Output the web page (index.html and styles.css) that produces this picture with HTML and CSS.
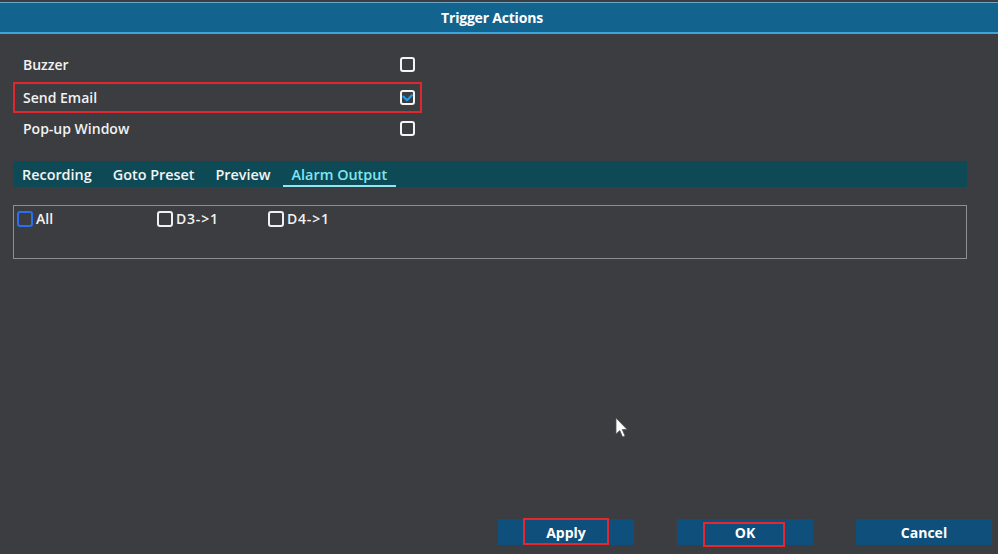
FILE: index.html
```html
<!DOCTYPE html>
<html>
<head>
<meta charset="utf-8">
<title>Trigger Actions</title>
<link rel="stylesheet" href="styles.css">
</head>
<body>
<div class="screen">
  <div class="titlebar"><span class="title">Trigger Actions</span></div>

  <div class="options">
    <div class="opt first"><span>Buzzer</span><span class="cb"></span></div>
    <div class="opt hl"><span>Send Email</span><span class="cb checked"><svg viewBox="0 0 12 12" width="12" height="12"><path d="M1.5 4.5 L5.5 8.5 L10.8 3" fill="none" stroke="#1e9cf0" stroke-width="2.4" stroke-linecap="round" stroke-linejoin="round"/></svg></span></div>
    <div class="opt last"><span>Pop-up Window</span><span class="cb"></span></div>
  </div>

  <div class="tabs">
    <span class="tab">Recording</span>
    <span class="tab">Goto Preset</span>
    <span class="tab">Preview</span>
    <span class="tab active">Alarm Output</span>
  </div>

  <div class="panel">
    <div class="item w1"><span class="cb2 blue"></span><span>All</span></div>
    <div class="item w2"><span class="cb2"></span><span class="sp">D3-&gt;1</span></div>
    <div class="item"><span class="cb2"></span><span class="sp">D4-&gt;1</span></div>
  </div>

  <div class="footer">
    <div class="btn">Apply<span class="mark m1"></span></div>
    <div class="btn">OK<span class="mark m2"></span></div>
    <div class="btn">Cancel</div>
  </div>

  <svg class="cursor" width="14" height="22" viewBox="0 0 14 22"><path d="M1 1 L1 17 L4.8 13.6 L7.6 20 L10 19 L7.3 12.6 L12.2 12.6 Z" fill="#ffffff" stroke="#555" stroke-width="0.8"/></svg>
</div>
</body>
</html>
```

FILE: styles.css
```css
* { box-sizing: border-box; }
html, body { margin: 0; padding: 0; }
body {
  background: #3b3d41;
  font-family: "Open Sans", "Noto Sans", sans-serif;
  color: #f2f2f2;
}
.screen {
  position: relative;
  width: 998px;
  height: 554px;
  display: flex;
  flex-direction: column;
  background: #3b3d41;
  overflow: hidden;
}
.titlebar {
  margin-top: 2px;
  height: 32px;
  background: #13638f;
  border-top: 1px solid #6aa6c6;
  border-bottom: 2px solid #3ea4dc;
  display: flex;
  align-items: center;
  justify-content: center;
  padding-right: 14px;
}
.title {
  font-weight: 700;
  font-size: 14px;
  color: #ffffff;
  letter-spacing: -0.2px;
}
.options {
  margin: 14px 0 0 13px;
  width: 409px;
  display: flex;
  flex-direction: column;
}
.opt {
  height: 32px;
  display: flex;
  align-items: center;
  justify-content: space-between;
  padding: 0 5px 0 8px;
  border: 2px solid transparent;
  font-size: 14px;
  font-weight: 600;
}
.opt.first { height: 34px; padding-bottom: 1px; }
.opt.hl { border-color: #e0262e; height: 31px; }
.opt.last { height: 30px; }
.cb {
  width: 15px;
  height: 15px;
  border: 2px solid #f4f4f4;
  border-radius: 3px;
  display: flex;
  align-items: center;
  justify-content: center;
}
.tabs {
  margin: 18px 0 0 13px;
  width: 954px;
  height: 26px;
  background: #0e4a56;
  display: flex;
  align-items: stretch;
  gap: 3px;
  font-size: 14.4px;
  font-weight: 600;
}
.tab {
  padding: 3px 9px 0;
  display: flex;
  align-items: center;
  color: #f4f4f4;
  border-bottom: 2px solid transparent;
}
.tab.active {
  color: #7fe6f2;
  border-bottom-color: #8fe8f0;
}
.panel {
  margin: 18px 0 0 13px;
  width: 954px;
  height: 54px;
  border: 1.5px solid #8a8d91;
  display: flex;
  align-items: flex-start;
  padding: 3px 0 0 3px;
  font-size: 14px;
  font-weight: 600;
}
.item {
  display: flex;
  align-items: center;
  gap: 3px;
  padding-top: 1px;
  line-height: 18px;
}
.sp { letter-spacing: 0.8px; }
.w1 { width: 140px; }
.w2 { width: 111px; }
.cb2 {
  width: 16px;
  height: 16px;
  border: 2px solid #f0f0f0;
  border-radius: 3px;
}
.cb2.blue { border-color: #2a6ff0; }
.footer {
  margin-top: auto;
  display: flex;
  justify-content: flex-end;
  gap: 43px;
  padding: 0 6px 9px 0;
}
.btn {
  position: relative;
  width: 136px;
  height: 26px;
  background: #0f4f7c;
  display: flex;
  align-items: center;
  justify-content: center;
  font-size: 14px;
  font-weight: 700;
  color: #ffffff;
}
.mark {
  position: absolute;
  border: 2px solid #e8262e;
}
.m1 { left: 25px; top: -1px; width: 86px; height: 27px; }
.m2 { left: 26px; top: 3px; width: 82px; height: 25px; }
.cursor {
  position: absolute;
  left: 615px;
  top: 417px;
}
```
